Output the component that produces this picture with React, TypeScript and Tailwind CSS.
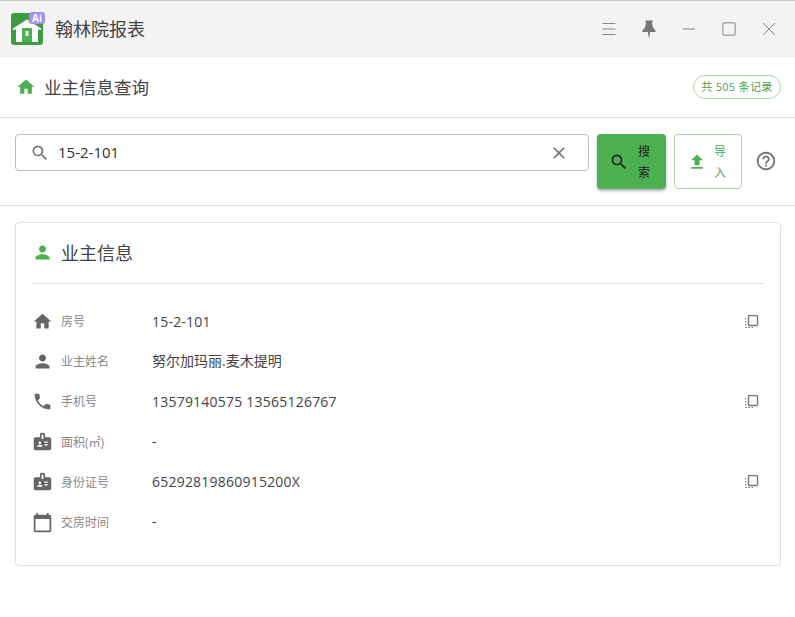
import { MdHome, MdPerson, MdPhone, MdBadge, MdCalendarToday, MdFileUpload, MdSearch, MdClose, MdHelpOutline } from "react-icons/md";
import type { IconType } from "react-icons";

const fontStack = "font-['Open_Sans','Noto_Sans_CJK_SC',sans-serif]";

const CopyIcon = () => (
	<svg width="14" height="14" viewBox="0 0 14 14" fill="none" className="text-[#777] mt-[1px]">
		<rect x="3.5" y="0.5" width="9" height="10" rx="1" stroke="currentColor" strokeWidth="1.4" />
		<path d="M0.5 3v1.5M0.5 6v1.5M0.5 9v1.5M0.5 12.5h1.5M3.5 12.5h1.5M6.500 12.500h1.500" stroke="currentColor" strokeWidth="1" />
	</svg>
);

const Logo = () => (
	<div className="relative w-[33px] h-[34px]">
		<svg width="32" height="32" viewBox="0 0 32 32" className="absolute left-0 top-[1px]">
			<rect width="32" height="32" rx="3" fill="#3f9a45" />
			<path d="M16 6.500 L30 15.500 V17 L27 16.500 V29 H5 V16.500 L2 17 V15.500 Z" fill="#fff" />
			<rect x="11" y="15" width="10" height="14" fill="#4caf50" />
			<rect x="14.500" y="18" width="3" height="5" fill="#e8f5e9" />
			<rect x="17.500" y="7" width="3" height="3" fill="#f5d65c" />
		</svg>
		<div className="absolute left-[18px] top-0 w-[16px] h-[12px] rounded-[3px] bg-[#a08ff5] flex items-center justify-center text-[10px] leading-none font-bold text-white">
			Ai
		</div>
	</div>
);

const rows: { icon: IconType; label: string; value: string; copy?: boolean; latin?: boolean }[] = [
	{ icon: MdHome, label: "房号", value: "15-2-101", copy: true, latin: true },
	{ icon: MdPerson, label: "业主姓名", value: "努尔加玛丽.麦木提明" },
	{ icon: MdPhone, label: "手机号", value: "13579140575 13565126767", copy: true, latin: true },
	{ icon: MdBadge, label: "面积(㎡)", value: "-" },
	{ icon: MdBadge, label: "身份证号", value: "65292819860915200X", copy: true, latin: true },
	{ icon: MdCalendarToday, label: "交房时间", value: "-" },
];

export default function App() {
	return (
		<div className={`w-[795px] h-[617px] overflow-hidden bg-white ${fontStack}`}>
			{/* title bar */}
			<div className="h-[57px] bg-[#f3f3f3] border-t border-[#ccc] flex items-center pl-[11px] pr-[16px]">
				<Logo />
				<span className="ml-[11px] text-[18px] text-[#444]">翰林院报表</span>
				<div className="ml-auto flex items-center gap-[20px] text-[#888]">
					<svg width="20" height="20" viewBox="0 0 20 20" stroke="currentColor" strokeWidth="1.200">
						<path d="M3.500 4.500h13M3.500 10h13M3.500 15.500h13" />
					</svg>
					<svg width="20" height="20" viewBox="0 0 20 20" fill="#777">
						<path d="M6 1.500h8l-1 2 1 5 2.500 3v1.500h-5.300l-1 5.500h-.4l-1-5.500H3.500V11.500L6 8.500l1-5z" />
					</svg>
					<svg width="20" height="20" viewBox="0 0 20 20" stroke="#aaa" strokeWidth="1.500">
						<path d="M4 10h12" />
					</svg>
					<svg width="20" height="20" viewBox="0 0 20 20" fill="none" stroke="#aaa" strokeWidth="1.500">
						<rect x="3.800" y="3.800" width="12.400" height="12.400" rx="2" />
					</svg>
					<svg width="20" height="20" viewBox="0 0 20 20" stroke="#888" strokeWidth="1">
						<path d="M4 4l12 12M16 4L4 16" />
					</svg>
				</div>
			</div>

			{/* page header */}
			<div className="h-[61px] border-b border-[#e0e0e0] flex items-center pl-[16px] pr-[14px]">
				<MdHome size={20} className="text-[#4caf50]" />
				<span className="ml-[8px] text-[17.500px] text-[#444]">业主信息查询</span>
				<span className="ml-auto h-[24px] px-[7.500px] flex items-center rounded-full border border-[#a5d6a7] text-[11px] tracking-[0.3px] text-[#4a9f4e]">
					共 505 条记录
				</span>
			</div>

			{/* search */}
			<div className="h-[88px] border-b border-[#e0e0e0] flex items-start pt-[16px] pl-[15px]">
				<div className="w-[574px] h-[37px] rounded-[4px] border border-[#bdbdbd] flex items-center pl-[14px] pr-[19px]">
					<MdSearch size={20} className="text-[#757575]" />
					<span className="ml-[8px] text-[15px] text-[#333]">15-2-101</span>
					<MdClose size={20} className="ml-auto text-[#757575]" />
				</div>
				<button className="ml-[8px] w-[69px] h-[55px] rounded-[4px] bg-[#4caf50] shadow-[0_2px_3px_rgba(0,0,0,0.3)] flex items-center pl-[12px] text-[#222]">
					<MdSearch size={20} />
					<span className="ml-[8px] w-[14px] text-[12px] leading-[21px]">搜索</span>
				</button>
				<button className="ml-[8px] w-[68px] h-[55px] rounded-[4px] border border-[#a5d6a7] flex items-center pl-[12px] text-[#4caf50]">
					<MdFileUpload size={20} />
					<span className="ml-[6px] w-[14px] text-[12px] leading-[21px]">导入</span>
				</button>
				<MdHelpOutline size={22} className="ml-[13px] mt-[16px] text-[#757575]" />
			</div>

			{/* owner card */}
			<div className="ml-[15px] mr-[14px] mt-[16px] h-[344px] rounded-[4px] border border-[#e0e0e0] pl-[15px] pr-[16px]">
				<div className="h-[61px] border-b border-[#e0e0e0] flex items-center pl-[1px]">
					<MdPerson size={21} className="text-[#4caf50] -mt-[2px]" />
					<span className="ml-[8px] text-[18px] text-[#444]">业主信息</span>
				</div>
				<div className="mt-[17px] flex flex-col">
					{rows.map((row) => (
						<div key={row.label} className="h-[40.200px] flex items-center pl-[1px] pr-[5px]">
							<row.icon size={21} className="text-[#666]" />
							<span className="ml-[8px] w-[91px] pt-[2px] text-[12px] text-[#888]">{row.label}</span>
							<span className={`text-[14px] text-[#444] ${row.latin ? "tracking-[0.22px]" : "-mt-[1px]"}`}>{row.value}</span>
							{row.copy && (
								<span className="ml-auto">
									<CopyIcon />
								</span>
							)}
						</div>
					))}
				</div>
			</div>
		</div>
	);
}
